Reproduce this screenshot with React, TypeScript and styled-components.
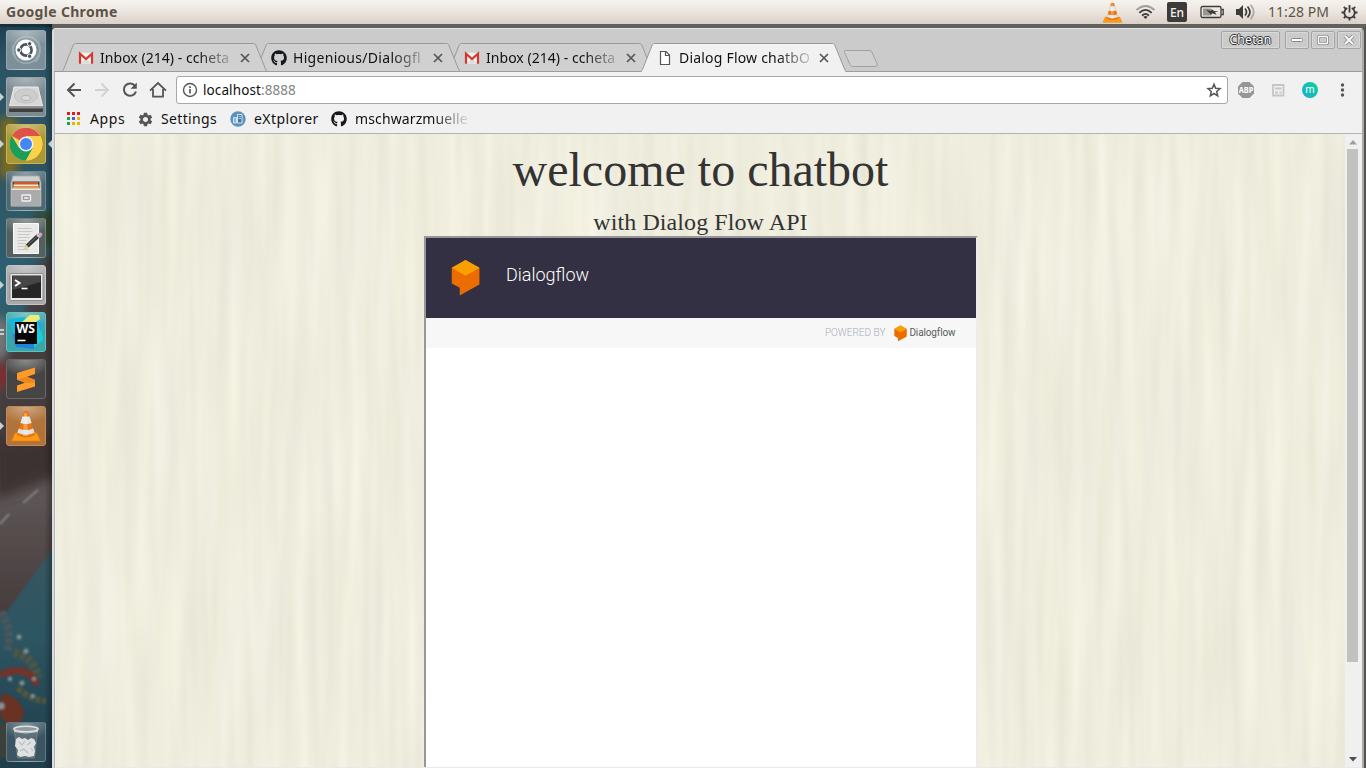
import React from 'react';
import styled, { createGlobalStyle, css } from 'styled-components';
import { FaGithub } from 'react-icons/fa';
import { MdSettings } from 'react-icons/md';

const UI = `"Noto Sans", "Open Sans", sans-serif`;

const GlobalStyle = createGlobalStyle`
  * { box-sizing: border-box; }
  html, body { margin: 0; padding: 0; overflow: hidden; }
  svg { display: block; flex: none; }
`;

const Desktop = styled.div`
  width: 1366px;
  height: 768px;
  display: flex;
  flex-direction: column;
  overflow: hidden;
  background: #55534f;
  font-family: ${UI};
`;

/* ---------- top panel ---------- */
const Panel = styled.header`
  flex: none;
  height: 24px;
  display: flex;
  align-items: center;
  justify-content: space-between;
  padding: 0 8px 0 6px;
  background: linear-gradient(#f6f3ef, #ebe5df 50%, #d9d0c7);
  color: #5d5347;
`;
const PanelTitle = styled.span`
  font-size: 14px;
  line-height: 24px;
  font-weight: 700;
  letter-spacing: 0.32px;
`;
const Indicators = styled.div`
  display: flex;
  align-items: center;
`;
const Indicator = styled.span<{ $gap: number }>`
  margin-left: ${p => p.$gap}px;
  display: flex;
`;
const LangBox = styled.span`
  width: 20px;
  height: 20px;
  border-radius: 2px;
  background: #3c3b39;
  color: #f2efeb;
  font-size: 12px;
  font-weight: 500;
  line-height: 21px;
  text-align: center;
`;
const Clock = styled.span`
  width: 63px;
  font-size: 14px;
  line-height: 24px;
  letter-spacing: 0.05px;
  white-space: nowrap;
`;

/* ---------- launcher ---------- */
const Workspace = styled.div`
  flex: 1;
  min-height: 0;
  display: flex;
`;
const Launcher = styled.nav`
  width: 52px;
  flex: none;
  display: grid;
  overflow: hidden;
  & > * { grid-area: 1 / 1; }
`;
const LauncherItems = styled.div`
  display: flex;
  flex-direction: column;
  gap: 7px;
  padding: 6px 0 6px;
  z-index: 1;
`;
const LauncherRow = styled.div<{ $last?: boolean }>`
  display: grid;
  grid-template-columns: 6px 40px 6px;
  align-items: center;
  ${p => p.$last && css`margin-top: auto;`}
`;
const Tile = styled.div<{ $bg: string; $edge?: string }>`
  width: 40px;
  height: 40px;
  border-radius: 3px;
  border: 1px solid ${p => p.$edge ?? 'rgba(255,255,255,0.2)'};
  background: radial-gradient(ellipse 28px 16px at 50% 0, rgba(255,255,255,.38), transparent), ${p => p.$bg};
  display: flex;
  align-items: center;
  justify-content: center;
`;
const Marks = styled.div`
  display: flex;
  flex-direction: column;
  gap: 2px;
`;
const Dash = styled.i`
  width: 4px;
  height: 2px;
  background: #c9ccce;
`;
const Pip = styled.i<{ $side: 'left' | 'right' }>`
  width: 0;
  height: 0;
  border: 4px solid transparent;
  ${p => p.$side === 'left'
    ? css`border-left-color: #c9d0d4; border-right: 0;`
    : css`border-right-color: #c9d0d4; border-left: 0; margin-left: 2px;`}
`;

/* ---------- browser window ---------- */
const Frame = styled.main`
  flex: 1;
  min-width: 0;
  display: flex;
  flex-direction: column;
  border-top: 4px solid #62605c;
  border-right: 2px solid #55534f;
`;
const Window = styled.div`
  flex: 1;
  min-height: 0;
  display: flex;
  flex-direction: column;
  border: solid;
  border-width: 1px 2px 0 2px;
  border-color: #e6e6e6 #a9a9a9 #e6e6e6 #dcdcdc;
  border-radius: 4px 4px 0 0;
  background: #cbcbcb;
`;
const TitleBar = styled.div`
  height: 43px;
  flex: none;
  display: flex;
  justify-content: space-between;
  align-items: flex-start;
  box-shadow: inset 0 -1px #9d9d9d;
`;
const Tabs = styled.div`
  display: flex;
  padding: 14px 0 0 8px;
`;
const TabBox = styled.div<{ $level: number }>`
  width: 206px;
  height: 29px;
  margin-right: -13px;
  display: grid;
  z-index: ${p => p.$level};
  & > * { grid-area: 1 / 1; }
`;
const TabContent = styled.div`
  display: flex;
  align-items: center;
  padding: 1px 0 0 16px;
  z-index: 1;
`;
const TabTitle = styled.span<{ $track: number }>`
  width: 134px;
  margin: -1px 6px 0 6px;
  white-space: nowrap;
  font-size: 14px;
  line-height: 20px;
  color: #111;
  letter-spacing: ${p => p.$track}px;
  mask-image: linear-gradient(90deg, #000 98px, transparent 138px);
`;
const NewTab = styled.div`
  margin: 6px 0 0 9px;
`;
const Controls = styled.div`
  display: flex;
  padding: 2px 1px 0 0;
  gap: 2px;
`;
const WinButton = styled.div<{ $w: number; $gap?: number }>`
  width: ${p => p.$w}px;
  height: 18px;
  margin-right: ${p => p.$gap ?? 0}px;
  border: 1px solid #a4a4a4;
  border-radius: 2px;
  box-shadow: inset 0 0 0 1px #d8d8d8;
  display: flex;
  align-items: center;
  justify-content: center;
  color: #fff;
  font-size: 12px;
  line-height: 16px;
  letter-spacing: 0.3px;
  text-shadow: 1px 0 #333, -1px 0 #333, 0 1px #333, 0 -1px #333;
`;
const Body = styled.div`
  flex: 1;
  min-height: 0;
  display: flex;
  flex-direction: column;
  background: #f1f1f1;
  border-left: 1px solid #b5b5b5;
`;
const Toolbar = styled.div`
  height: 36px;
  flex: none;
  display: flex;
  align-items: center;
  padding-left: 10px;
  color: #555;
`;
const NavIcons = styled.div`
  width: 111px;
  display: flex;
  gap: 10px;
`;
const Omnibox = styled.div`
  width: 1052px;
  height: 28px;
  display: flex;
  align-items: center;
  padding: 0 5px;
  border: 1px solid #a8a8a8;
  border-radius: 3px;
  background: #fff;
`;
const Url = styled.span`
  flex: 1;
  margin-left: 5px;
  font-size: 13.5px;
  letter-spacing: 0.1px;
  color: #111;
`;
const Port = styled.span`
  color: #858585;
`;
const Extensions = styled.div`
  display: flex;
  align-items: center;
  gap: 14px;
  margin-left: 9px;
`;
const Bookmarks = styled.div`
  height: 26px;
  flex: none;
  display: flex;
  align-items: flex-start;
  padding: 1px 0 0 10px;
  border-bottom: 1px solid #b4b4b4;
`;
const Bookmark = styled.div<{ $w: number; $gap?: number }>`
  width: ${p => p.$w}px;
  height: 20px;
  display: flex;
  align-items: center;
  gap: ${p => p.$gap ?? 8}px;
`;
const BookmarkName = styled.span<{ $fade?: boolean; $track?: number }>`
  font-size: 14px;
  line-height: 20px;
  color: #111;
  white-space: nowrap;
  letter-spacing: ${p => p.$track ?? 0}px;
  ${p => p.$fade && css`mask-image: linear-gradient(90deg, #000 78px, transparent 116px);`}
`;

/* ---------- web page ---------- */
const Viewport = styled.div`
  flex: 1;
  min-height: 0;
  display: flex;
  padding-left: 1px;
  border-bottom: 1px solid #e9e9e9;
`;
const Page = styled.div`
  width: 1289px;
  height: 633px;
  display: grid;
  overflow: hidden;
  & > * { grid-area: 1 / 1; min-width: 0; min-height: 0; }
`;
const Content = styled.div`
  z-index: 1;
  display: flex;
  flex-direction: column;
  align-items: center;
  font-family: "Liberation Serif", serif;
  color: #333;
`;
const Heading = styled.h1`
  margin: 8px 0 0;
  font-size: 48px;
  font-weight: 400;
  line-height: 56px;
`;
const SubHeading = styled.h2`
  margin: 10px 0 0;
  font-size: 24px;
  font-weight: 400;
  line-height: 28px;
  letter-spacing: 0.08px;
`;
const ChatFrame = styled.section`
  width: 554px;
  flex: 1;
  border: 2px solid;
  border-color: #979797 #ececec #ececec #979797;
  border-bottom: 0;
  background: #fff;
  font-family: Roboto, sans-serif;
`;
const ChatHeader = styled.div`
  height: 80px;
  display: flex;
  align-items: flex-start;
  padding: 21px 0 0 25px;
  background: #323042;
`;
const ChatTitle = styled.span`
  margin: 4px 0 0 26.5px;
  font-size: 18px;
  font-weight: 300;
  line-height: 24px;
  color: #fff;
`;
const PoweredBy = styled.div`
  height: 30px;
  display: flex;
  align-items: center;
  justify-content: flex-end;
  padding: 0 20px 2px 0;
  background: #f7f7f7;
  font-size: 10px;
  font-weight: 300;
  color: #a9acbf;
`;
const Brand = styled.span`
  margin-left: 2px;
  font-size: 10px;
  font-weight: 400;
  color: #5c5c5c;
  letter-spacing: -0.12px;
`;
const BrandMark = styled.span`
  margin: 2px 0 0 9px;
`;
const ScrollTrack = styled.div`
  width: 16px;
  display: flex;
  flex-direction: column;
  align-items: center;
  padding: 6px 1px 5px 0;
  background: #f0f0f0;
`;
const Thumb = styled.div`
  width: 11px;
  height: 513px;
  margin: 4px 0 auto;
  background: #c1c1c1;
`;

/* ---------- drawings ---------- */
const Cone = ({ size }: { size: number }) => (
  <svg width={size} height={size} viewBox="0 0 32 32">
    <path d="M5 23h22l3.500 8h-29z" fill="#ff9a16" stroke="#e87a00" strokeWidth=".7" />
    <path d="M13.700 2q2.300-2 4.600 0L25 25q-9 5-18 0z" fill="#ea7409" />
    <path d="M12.400 6.500h7.200l2 6.500q-5.600 2-11.200 0z" fill="#e6e8e8" />
    <path d="M8.800 18.500q7.200 3 14.400 0l1.400 4.300q-8.600 4-17.200 0z" fill="#dfe2e3" />
    <path d="M14 3h3l1 23h-5z" fill="#fff" opacity=".3" />
  </svg>
);

const Gmail = () => (
  <svg width="16" height="16" viewBox="0 0 16 16">
    <path d="M1.500 2.800h13v11h-13z" fill="#f0f0f0" />
    <path d="M3 13.500l5-5 5 5z" fill="#dcdcdc" />
    <path d="M2 13.700V3.600L8 9l6-5.400v10.100" fill="none" stroke="#d3382c" strokeWidth="2.200" />
  </svg>
);

const FileIcon = () => (
  <svg width="16" height="16" viewBox="0 0 16 16">
    <path d="M3.500 1.500h5.500l3.500 3.500v9.500h-9z" fill="#fff" stroke="#555" strokeWidth="1.200" />
    <path d="M8.500 1.500V5.500h4" fill="none" stroke="#555" strokeWidth="1.200" />
  </svg>
);

const TabShape = ({ active }: { active?: boolean }) => (
  <svg width="206" height="29" viewBox="0 0 206 29">
    <path
      d="M0 28.500L1.500 26.500L10.800 3C11.600 1 12.200 .5 13.500 .5H191.500C192.800 .5 193.400 1 194.200 3L203.500 26L205 28.500"
      fill={active ? '#f1f1f1' : '#d0d0d0'}
      stroke="#999"
    />
    {active
      ? <path d="M1 28.500H204" stroke="#f1f1f1" strokeWidth="1.400" />
      : <path d="M0 28.500H206" stroke="#9d9d9d" />}
  </svg>
);

const Cross = () => (
  <svg width="10" height="10" viewBox="0 0 10 10" stroke="#555" strokeWidth="1.700">
    <path d="M1 1l8 8M9 1l-8 8" />
  </svg>
);

const Cube = ({ width }: { width: number }) => (
  <svg width={width} height={width * 1.26} viewBox="0 0 30 38">
    <path d="M15 1L29.500 9v17.500L9 38v-8L.7 25.500V9z" fill="#ec6c00" />
    <path d="M15 1l14.500 8L15 17.500 .7 9z" fill="#f9a000" />
  </svg>
);

const Wallpaper = () => (
  <svg width="52" height="744" viewBox="0 24 52 744">
    <defs>
      <linearGradient id="sea" x1="0" y1="0" x2="0" y2="1">
        <stop offset="0" stopColor="#1d4052" />
        <stop offset=".05" stopColor="#2c5465" />
        <stop offset=".2" stopColor="#2f5565" />
        <stop offset=".37" stopColor="#2b6273" />
        <stop offset=".45" stopColor="#48474a" />
        <stop offset=".56" stopColor="#3d3a3c" />
        <stop offset=".7" stopColor="#375761" />
        <stop offset=".82" stopColor="#2d5562" />
        <stop offset="1" stopColor="#1f3d4b" />
      </linearGradient>
      <linearGradient id="arm" x1="0" y1="0" x2="0" y2="1">
        <stop offset="0" stopColor="#403232" />
        <stop offset=".3" stopColor="#5f5758" />
        <stop offset="1" stopColor="#453a3a" />
      </linearGradient>
      <linearGradient id="shade" x1="0" y1="0" x2="1" y2="0">
        <stop offset=".85" stopColor="#000" stopOpacity="0" />
        <stop offset="1" stopColor="#000" stopOpacity=".3" />
      </linearGradient>
      <filter id="soft" x="-40%" y="-40%" width="180%" height="180%"><feGaussianBlur stdDeviation="4" /></filter>
      <filter id="mid"><feGaussianBlur stdDeviation="1.200" /></filter>
      <filter id="wide" x="-40%" y="-40%" width="180%" height="180%"><feGaussianBlur stdDeviation="6" /></filter>
      <filter id="fine"><feGaussianBlur stdDeviation="1.100" /></filter>
    </defs>
    <path d="M0 24h52v744H0z" fill="url(#sea)" />
    <g filter="url(#soft)">
      <path d="M0 118h14q14 20 0 60H0z" fill="#7a6a1c" />
      <path d="M34 212h24v34H34z" fill="#30492f" />
      <path d="M58 248L26 272 26 340 0 346v134h58z" fill="#443e3e" />
      <ellipse cx="0" cy="338" rx="8" ry="22" fill="#77787a" />
      <ellipse cx="0" cy="376" rx="10" ry="13" fill="#7b2f33" />
    </g>
    <path d="M-4 460L58 430v112L8 610-4 622z" fill="url(#arm)" filter="url(#mid)" />
    <path d="M-6 436q30 12 64-8v46q-28 14-64 26z" fill="#3d3031" filter="url(#wide)" />
    <g filter="url(#fine)">
      <path d="M23 503L38 490M0 524l9-10" stroke="#8f9498" strokeWidth="1.600" />
      <path d="M1 612q12 18 6 40" stroke="#4c575b" strokeWidth="8" fill="none" strokeDasharray="5 2" />
      <path d="M14 652q20 6 24 26" stroke="#4f5644" strokeWidth="9" fill="none" strokeDasharray="5 2" />
      <path d="M0 675q28-12 37 10" stroke="#733329" strokeWidth="7" fill="none" />
      <path d="M2 693q18 4 22 20-4 14-12 16L0 716z" fill="#6b3022" />
      <path d="M18 688q12 12 28 13" stroke="#57583a" strokeWidth="6" fill="none" strokeDasharray="5 2" />
      <g fill="#87908f">
        <circle cx="19" cy="637" r="2.500" /><circle cx="26" cy="651" r="2.500" /><circle cx="10" cy="679" r="2.200" />
        <circle cx="22" cy="683" r="2.500" /><circle cx="33" cy="696" r="2.200" /><circle cx="1" cy="706" r="3.500" />
        <circle cx="34" cy="679" r="2" />
      </g>
      <path d="M0 724h10v34H0z" fill="#3c3f39" />
    </g>
    <path d="M0 24h52v744H0z" fill="url(#shade)" />
    <path d="M0 24h52v3H0z" fill="#000" opacity=".25" />
  </svg>
);

const UbuntuIcon = () => (
  <svg width="38" height="38" viewBox="0 0 38 38">
    <g fill="none" stroke="#fff" opacity=".25" strokeWidth="1.500">
      <path d="M8 26C2 12 14 2 26 7c9 5 9 18 2 24" />
      <path d="M31 10c6 14-4 24-15 22C8 30 4 22 6 14" />
    </g>
    <circle cx="19" cy="19" r="10.500" fill="#fff" />
    <circle cx="19" cy="19" r="5.600" fill="none" stroke="#47545b" strokeWidth="2.600" />
    <g fill="#47545b" stroke="#fff" strokeWidth="1">
      <circle cx="11.800" cy="19" r="2.200" /><circle cx="22.600" cy="12.800" r="2.200" /><circle cx="22.600" cy="25.200" r="2.200" />
    </g>
  </svg>
);

const DiskIcon = () => (
  <svg width="38" height="38" viewBox="0 0 38 38">
    <path d="M7 9h24l4.500 19h-33z" fill="#d8d8d8" stroke="#ededed" />
    <ellipse cx="19" cy="18" rx="11.500" ry="7" fill="#cdcdcd" stroke="#c2c2c2" />
    <ellipse cx="19" cy="20" rx="4.500" ry="2.500" fill="#dadada" stroke="#b3b3b3" />
    <path d="M2 28h34v5q0 1-1 1H3q-1 0-1-1z" fill="#3e3e3e" />
    <path d="M2 28h34v2.500H2z" fill="#8e8e8e" />
  </svg>
);

const ChromeIcon = () => (
  <svg width="34" height="34" viewBox="0 0 34 34">
    <circle cx="17" cy="17" r="16.500" fill="#fbd14b" />
    <path d="M17 17L2.700 8.800A16.500 16.500 0 0 1 31.300 9H17z" fill="#dd5347" />
    <path d="M2.700 8.800A16.500 16.500 0 0 0 17 33.500L23.900 21 10.100 21z" fill="#1a9e59" />
    <path d="M17 9h14.300A16.500 16.500 0 0 1 17 33.500l6.900-12.500z" fill="#fbd14b" />
    <circle cx="17" cy="17" r="7.500" fill="#f1f1f1" />
    <circle cx="17" cy="17" r="6" fill="#4486f4" />
  </svg>
);

const FilesIcon = () => (
  <svg width="38" height="38" viewBox="0 0 38 38">
    <path d="M6 4h26l2 7v23H4V11z" fill="#cfd0d1" stroke="#a9acad" strokeWidth=".8" />
    <path d="M5.500 9.500h27v8h-27z" fill="#4a4038" />
    <path d="M7 10h24v3H7z" fill="#c85d35" />
    <path d="M6.500 12.500h25v2h-25z" fill="#f8e9d0" />
    <path d="M6 14.500h26v3H6z" fill="#ee9a45" />
    <path d="M4.500 17h29v17.500h-29z" fill="#a9abac" />
    <path d="M4.500 16.500h29v1.500h-29z" fill="#e6e7e7" />
    <rect x="15" y="23" width="8.500" height="6" rx=".5" fill="#9b9d9e" stroke="#f4f4f4" strokeWidth="1.300" />
    <path d="M17 26h4.500" stroke="#eee" strokeWidth="1.600" />
  </svg>
);

const EditorIcon = () => (
  <svg width="38" height="38" viewBox="0 0 38 38">
    <path d="M6.500 4.500h25v30h-25z" fill="#e9e9e7" stroke="#fbfbfb" />
    <path d="M10.500 9.500h14M10.500 12.500h15M10.500 15.500h12M10.500 18.500h12M10.500 21.500h9M10.500 24.500h8M10.500 27.500h8M10.500 30.500h11" stroke="#c9c9c9" />
    <path d="M17.500 30l1.500-4.500L30 15l3 3L21.500 28.500z" fill="#333" />
    <path d="M20 27l11-10.500" stroke="#777" strokeWidth=".9" />
    <path d="M17 30.500l1.800-5 3.200 3.300z" fill="#ead68c" />
    <path d="M31 14.500q2.500-2 4 0 1.200 1.500-.7 3L33 18.500 29.800 15.700z" fill="#df9cc2" />
    <path d="M29 16l1.300-1.200 3.200 3.200-1.300 1.200z" fill="#ccc" />
  </svg>
);

const TerminalIcon = () => (
  <svg width="38" height="38" viewBox="0 0 38 38">
    <rect x="3" y="7.500" width="33" height="27" rx="1" fill="#e9e9e9" stroke="#8b8b8b" />
    <path d="M5 9.500h29v22.500H5z" fill="#262626" />
    <path d="M5.500 10h28v6L5.500 24z" fill="#464646" />
    <path d="M8 14l4.500 3-4.500 3" fill="none" stroke="#fff" strokeWidth="2" />
    <path d="M14.500 22.500h6" stroke="#fff" strokeWidth="1.600" />
  </svg>
);

const StormIcon = () => (
  <svg width="38" height="38" viewBox="0 0 38 38">
    <path d="M2 6l16-2 4 24-14 4z" fill="#11b9dc" />
    <path d="M24 8l9-3 3 22-10 8H14z" fill="#17cfd8" />
    <path d="M30 8l5 1.500-1 10z" fill="#2e9fe6" />
    <path d="M15 9l8-7h9l1 4-8 6z" fill="#e9ee78" />
    <path d="M5 20l4 14 18 2v-6z" fill="#2182dd" />
    <path d="M8 9h22v22H8z" fill="#080808" />
    <text x="9.500" y="20" fontFamily={UI} fontWeight="700" fontSize="12" textLength="18.500" lengthAdjust="spacingAndGlyphs" fill="#fff">WS</text>
    <path d="M10.500 27.500h8" stroke="#fff" strokeWidth="1.600" />
  </svg>
);

const SublimeIcon = () => (
  <svg width="38" height="38" viewBox="0 0 38 38">
    <path d="M10 13L28 7.500v6.500l-8 2.800 8 3v6.700L10 32v-6.500l8-2.800-8-3z" fill="#ff9a2b" />
    <path d="M10 19.700l10-2.900 8 3v3l-10-.1z" fill="#e77f16" opacity=".7" />
  </svg>
);

const TrashIcon = () => (
  <svg width="38" height="38" viewBox="0 0 38 38">
    <path d="M7.500 8h23l-3 27H10.500z" fill="#65787e" opacity=".7" stroke="#8b9ca1" strokeWidth=".7" />
    <ellipse cx="19" cy="6" rx="12.200" ry="2.800" fill="#8f9b9e" stroke="#dfe4e5" strokeWidth="1.500" />
    <path d="M7 8.500q12 3 24 0" fill="none" stroke="#c9d0d2" />
    <path d="M9 16l3-2 3 2 3-1 3 2 3-2 3 1 2 4-2 4 1 4-1 5-5 1-4-1-5 1-3-2 1-5-3-4z" fill="#dfe1e1" />
    <path d="M12 19l3 3 3-4M20 22l4-3M13 28l4-2 4 4M24 25l2 3" fill="none" stroke="#b6bcbd" strokeWidth="1.100" />
  </svg>
);

const Wood = () => (
  <svg width="1289" height="633">
    <defs>
      <filter id="grain" x="0" y="0" width="100%" height="100%" colorInterpolationFilters="sRGB">
        <feTurbulence type="fractalNoise" baseFrequency=".075 .005" numOctaves="2" seed="8" />
        <feColorMatrix values=".075 .012 0 0 .893  .075 .01 0 0 .886  .08 0 .026 0 .815  0 0 0 0 1" />
      </filter>
    </defs>
    <rect width="1289" height="633" filter="url(#grain)" />
  </svg>
);

type LauncherApp = { icon: React.ReactNode; bg: string; edge?: string; marks?: 'one' | 'two'; focused?: boolean };
const launcherApps: LauncherApp[] = [
  { icon: <UbuntuIcon />, bg: '#7d9099' },
  { icon: <DiskIcon />, bg: '#7b8b91', marks: 'one' },
  { icon: <ChromeIcon />, bg: '#ac9736', edge: '#c5b45c', marks: 'one', focused: true },
  { icon: <FilesIcon />, bg: '#4c6872' },
  { icon: <EditorIcon />, bg: '#53605f' },
  { icon: <TerminalIcon />, bg: '#a9a9ab', edge: '#c4c4c4', marks: 'one' },
  { icon: <StormIcon />, bg: '#3ba5a9', edge: '#5dc1c5', marks: 'two' },
  { icon: <SublimeIcon />, bg: '#454545', edge: '#6f6663' },
  { icon: <Cone size={32} />, bg: '#b0733c', edge: '#c08a57', marks: 'one' },
];

const tabs = [
  { icon: <Gmail />, title: 'Inbox (214) - ccheta', track: 0.04 },
  { icon: <FaGithub size={16} color="#15181c" />, title: 'Higenious/Dialogfl', track: 0.3 },
  { icon: <Gmail />, title: 'Inbox (214) - ccheta', track: 0.04 },
  { icon: <FileIcon />, title: 'Dialog Flow chatbO', track: 0.2, active: true },
];

const appColors = ['#e01b1b', '#e01b1b', '#e01b1b', '#18a34a', '#3f5fe8', '#f0b400', '#18a34a', '#f0b400', '#f0b400'];

export default function App() {
  return (
    <Desktop>
      <GlobalStyle />
      <Panel>
        <PanelTitle>Google Chrome</PanelTitle>
        <Indicators>
          <Indicator $gap={0}><Cone size={21} /></Indicator>
          <Indicator $gap={12}>
            <svg width="21" height="16" viewBox="0 0 21 16" fill="none" strokeWidth="1.800">
              <path d="M1.500 6Q10.500-2 19.500 6" stroke="#a29d96" />
              <path d="M4.300 8.800Q10.500 3 16.700 8.800" stroke="#3c3b39" />
              <path d="M7 11.600Q10.500 8 14 11.600" stroke="#3c3b39" />
              <path d="M8.300 12.800L10.500 15l2.200-2.200q-2.200-1.800-4.400 0z" fill="#3c3b39" />
            </svg>
          </Indicator>
          <Indicator $gap={11}><LangBox>En</LangBox></Indicator>
          <Indicator $gap={13}>
            <svg width="24" height="14" viewBox="0 0 24 14">
              <rect x="1" y="1.500" width="20" height="11" rx="1.500" fill="none" stroke="#3c3b39" strokeWidth="1.300" />
              <path d="M21.500 4.500h1.700v5h-1.700" fill="none" stroke="#3c3b39" strokeWidth="1.300" />
              <path d="M3 3.500h8v7H3z" fill="#9a9691" />
              <path d="M6 4.500l5 1.500.5-2 2.500 2 4.500.5-3.500.8 1.500 2.500-4.500-1.600-.8 1.800z" fill="#3c3b39" />
            </svg>
          </Indicator>
          <Indicator $gap={11}>
            <svg width="21" height="16" viewBox="0 0 21 16" fill="none" strokeWidth="1.700">
              <path d="M1 5h3l4-4v14l-4-4H1z" fill="#3c3b39" />
              <path d="M10 4.500q3 3.500 0 7" stroke="#3c3b39" />
              <path d="M12.500 2.500q5 5.500 0 11" stroke="#3c3b39" />
              <path d="M15.500 .8q6.500 7.200 0 14.400" stroke="#aaa59e" />
            </svg>
          </Indicator>
          <Indicator $gap={12}><Clock>11:28 PM</Clock></Indicator>
          <Indicator $gap={10}>
            <svg width="17" height="17" viewBox="0 0 17 17" fill="none" stroke="#3c3b39">
              <path d="M6.300 4A5.200 5.200 0 1 0 10.700 4" strokeWidth="1.800" />
              <path d="M8.500 1v7.500" strokeWidth="1.800" />
              <path d="M.5 8.500h3M13.500 8.500h3M8.500 13.500v3M2.800 2.800l2 2M14.200 2.800l-2 2M2.800 14.200l2-2M14.200 14.200l-2-2" strokeWidth="1.800" />
            </svg>
          </Indicator>
        </Indicators>
      </Panel>
      <Workspace>
        <Launcher>
          <Wallpaper />
          <LauncherItems>
            {launcherApps.map((a, i) => (
              <LauncherRow key={i}>
                <Marks>
                  {a.marks === 'one' && <Pip $side="left" />}
                  {a.marks === 'two' && <><Dash /><Dash /></>}
                </Marks>
                <Tile $bg={a.bg} $edge={a.edge}>{a.icon}</Tile>
                {a.focused && <Pip $side="right" />}
              </LauncherRow>
            ))}
            <LauncherRow $last>
              <Marks />
              <Tile $bg="#3b5662"><TrashIcon /></Tile>
            </LauncherRow>
          </LauncherItems>
        </Launcher>
        <Frame>
          <Window>
            <TitleBar>
              <Tabs>
                {tabs.map((t, i) => (
                  <TabBox key={i} $level={t.active ? 9 : 5 - i}>
                    <TabShape active={t.active} />
                    <TabContent>
                      {t.icon}
                      <TabTitle $track={t.track}>{t.title}</TabTitle>
                      <Cross />
                    </TabContent>
                  </TabBox>
                ))}
                <NewTab>
                  <svg width="36" height="19" viewBox="0 0 36 19">
                    <path d="M2.500 1.500H26q2 0 2.800 1.500l5.500 12q.6 2.300-1.500 2.500H9.500Q8 17.500 7 15.500L1.500 3.500Q1 1.500 2.500 1.500z" fill="#d0d0d0" stroke="#a0a0a0" />
                  </svg>
                </NewTab>
              </Tabs>
              <Controls>
                <WinButton $w={59} $gap={3}>Chetan</WinButton>
                <WinButton $w={24}>
                  <svg width="12" height="4"><rect x=".5" y=".5" width="11" height="3" rx="1" fill="#fff" stroke="#888" /></svg>
                </WinButton>
                <WinButton $w={24}>
                  <svg width="12" height="10"><rect x="1.500" y="1.500" width="9" height="7" rx="1" fill="none" stroke="#888" strokeWidth="3" /><rect x="1.500" y="1.500" width="9" height="7" rx="1" fill="none" stroke="#fff" strokeWidth="1.400" /></svg>
                </WinButton>
                <WinButton $w={24}>
                  <svg width="12" height="12" fill="none"><path d="M2 2l8 8M10 2l-8 8" stroke="#888" strokeWidth="3.600" /><path d="M2 2l8 8M10 2l-8 8" stroke="#fff" strokeWidth="1.800" /></svg>
                </WinButton>
              </Controls>
            </TitleBar>
            <Body>
              <Toolbar>
                <NavIcons>
                  <svg width="18" height="18" viewBox="0 0 18 18" fill="none" stroke="#555" strokeWidth="2"><path d="M16 9H3M9.500 2.500L3 9l6.500 6.500" /></svg>
                  <svg width="18" height="18" viewBox="0 0 18 18" fill="none" stroke="#d2d2d2" strokeWidth="2"><path d="M2 9h13M8.500 2.500L15 9l-6.500 6.500" /></svg>
                  <svg width="18" height="18" viewBox="0 0 18 18" fill="none" stroke="#555" strokeWidth="2"><path d="M14.300 5.200A6.200 6.200 0 1 0 15 10.500" /><path d="M15.800 1.500v6.300H9.500z" fill="#555" stroke="none" /></svg>
                  <svg width="18" height="18" viewBox="0 0 18 18" fill="none" stroke="#555" strokeWidth="1.800"><path d="M1 9.700L9 2l8 7.700M4 8v7.700h10V8" /></svg>
                </NavIcons>
                <Omnibox>
                  <svg width="16" height="16" viewBox="0 0 16 16" fill="none" stroke="#555" strokeWidth="1.400"><circle cx="8" cy="8" r="6.500" /><path d="M8 7v4.500M8 4.300v1.700" strokeWidth="1.700" /></svg>
                  <Url>localhost<Port>:8888</Port></Url>
                  <svg width="16" height="16" viewBox="0 0 16 16" fill="none" stroke="#555" strokeWidth="1.500"><path d="M8 2.200l1.700 4 4.300.4-3.300 2.900 1 4.300L8 11.500l-3.700 2.300 1-4.300L2 6.600l4.300-.4z" /></svg>
                </Omnibox>
                <Extensions>
                  <svg width="18" height="18" viewBox="0 0 18 18">
                    <path d="M5.500 1h7L17 5.500v7L12.500 17h-7L1 12.500v-7z" fill="#969696" />
                    <text x="1.700" y="12" fontFamily={UI} fontWeight="700" fontSize="8.500" textLength="14.600" lengthAdjust="spacingAndGlyphs" fill="#fff">ABP</text>
                  </svg>
                  <svg width="18" height="18" viewBox="0 0 18 18" fill="none" stroke="#c6c6c6" strokeWidth="1.800"><path d="M4 4h10.500v10.500H4zM6 7.500h6.500M6 11.500h3M10.500 11.500h2" /></svg>
                  <svg width="18" height="18" viewBox="0 0 18 18">
                    <defs><linearGradient id="m" x1="1" y1="0" x2="0" y2="1"><stop offset="0" stopColor="#06d894" /><stop offset="1" stopColor="#23a6d4" /></linearGradient></defs>
                    <circle cx="9" cy="9" r="8" fill="url(#m)" />
                    <text x="9" y="12" textAnchor="middle" fontFamily={UI} fontSize="10" fill="#fff">m</text>
                  </svg>
                  <svg width="18" height="18" viewBox="0 0 18 18" fill="#555"><circle cx="9.500" cy="4" r="1.700" /><circle cx="9.500" cy="9" r="1.700" /><circle cx="9.500" cy="14" r="1.700" /></svg>
                </Extensions>
              </Toolbar>
              <Bookmarks>
                <Bookmark $w={72} $gap={9}>
                  <svg width="16" height="16" viewBox="0 0 16 16">
                    {appColors.map((c, i) => <rect key={i} x={2 + (i % 3) * 5} y={1 + Math.floor(i / 3) * 5} width="3" height="3" fill={c} />)}
                  </svg>
                  <BookmarkName $track={0.6}>Apps</BookmarkName>
                </Bookmark>
                <Bookmark $w={93} $gap={7}>
                  <MdSettings size={17} color="#555" />
                  <BookmarkName $track={0.35}>Settings</BookmarkName>
                </Bookmark>
                <Bookmark $w={101}>
                  <svg width="16" height="16" viewBox="0 0 16 16">
                    <circle cx="8" cy="8" r="7.700" fill="#5b93be" />
                    <path d="M3.500 6.500h3v5.500h-3z" fill="#8db7d6" stroke="#e6f0f7" strokeWidth=".8" />
                    <path d="M7.500 3.500h4.500v8.500H7.500z" fill="#3d79a8" stroke="#e6f0f7" strokeWidth=".9" />
                    <path d="M8.500 5.500h2.500M8.500 7.500h2.500" stroke="#e6f0f7" strokeWidth=".7" />
                  </svg>
                  <BookmarkName $track={0.42}>eXtplorer</BookmarkName>
                </Bookmark>
                <Bookmark $w={138}>
                  <FaGithub size={16} color="#15181c" />
                  <BookmarkName $fade $track={0.12}>mschwarzmuelle</BookmarkName>
                </Bookmark>
              </Bookmarks>
              <Viewport>
                <Page>
                  <Wood />
                  <Content>
                    <Heading>welcome to chatbot</Heading>
                    <SubHeading>with Dialog Flow API</SubHeading>
                    <ChatFrame>
                      <ChatHeader>
                        <Cube width={29} />
                        <ChatTitle>Dialogflow</ChatTitle>
                      </ChatHeader>
                      <PoweredBy>
                        POWERED BY
                        <BrandMark><Cube width={13} /></BrandMark>
                        <Brand>Dialogflow</Brand>
                      </PoweredBy>
                    </ChatFrame>
                  </Content>
                </Page>
                <ScrollTrack>
                  <svg width="8" height="5"><path d="M0 4.500L4 0l4 4.500z" fill="#a0a0a0" /></svg>
                  <Thumb />
                  <svg width="8" height="5"><path d="M0 0h8L4 4.500z" fill="#4d4d4d" /></svg>
                </ScrollTrack>
              </Viewport>
            </Body>
          </Window>
        </Frame>
      </Workspace>
    </Desktop>
  );
}
